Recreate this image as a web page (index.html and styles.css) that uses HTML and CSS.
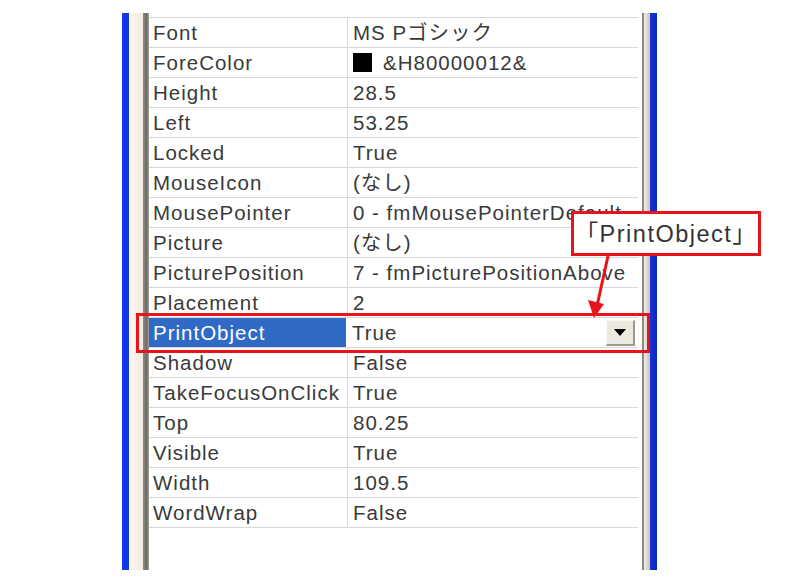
FILE: index.html
```html
<!DOCTYPE html>
<html>
<head>
<meta charset="utf-8">
<link rel="stylesheet" href="styles.css">
</head>
<body>
<div class="page">
  <div class="frame">
    <div class="edge blue"></div>
    <div class="edge beige"></div>
    <div class="edge gray"></div>
    <div class="grid">
      <div class="row"><div class="name">Font</div><div class="val">MS Pゴシック</div></div>
      <div class="row"><div class="name">ForeColor</div><div class="val"><span class="swatch"></span>&amp;H80000012&amp;</div></div>
      <div class="row"><div class="name">Height</div><div class="val">28.5</div></div>
      <div class="row"><div class="name">Left</div><div class="val">53.25</div></div>
      <div class="row"><div class="name">Locked</div><div class="val">True</div></div>
      <div class="row"><div class="name">MouseIcon</div><div class="val">(なし)</div></div>
      <div class="row"><div class="name">MousePointer</div><div class="val">0 - fmMousePointerDefault</div></div>
      <div class="row"><div class="name">Picture</div><div class="val">(なし)</div></div>
      <div class="row"><div class="name">PicturePosition</div><div class="val">7 - fmPicturePositionAbove</div></div>
      <div class="row"><div class="name">Placement</div><div class="val">2</div></div>
      <div class="row sel"><div class="name">PrintObject</div><div class="val"><span class="seltext">True</span><span class="drop"><svg width="12" height="7" viewBox="0 0 12 7"><path d="M0 0H12L6 7Z" fill="#000"/></svg></span></div></div>
      <div class="row"><div class="name">Shadow</div><div class="val">False</div></div>
      <div class="row"><div class="name">TakeFocusOnClick</div><div class="val">True</div></div>
      <div class="row"><div class="name">Top</div><div class="val">80.25</div></div>
      <div class="row"><div class="name">Visible</div><div class="val">True</div></div>
      <div class="row"><div class="name">Width</div><div class="val">109.5</div></div>
      <div class="row last"><div class="name">WordWrap</div><div class="val">False</div></div>
    </div>
    <div class="edge gray r"></div>
    <div class="edge beige r"></div>
    <div class="edge blue r"></div>
  </div>
  <div class="redbox"></div>
  <div class="callout">「PrintObject」</div>
  <svg class="arrow" width="40" height="70" viewBox="0 0 40 70">
    <line x1="30" y1="0" x2="19" y2="50" stroke="#e8141c" stroke-width="3"/>
    <path d="M10 44 L26 48 L16 62 Z" fill="#e8141c"/>
  </svg>
</div>
</body>
</html>
```

FILE: styles.css
```css
html, body {
  margin: 0;
  padding: 0;
  background: #ffffff;
}
.page {
  position: relative;
  width: 800px;
  height: 584px;
  overflow: hidden;
  font-family: "Liberation Sans", Arial, "Noto Sans CJK JP", sans-serif;
  color: #3a3a3a;
}
.frame {
  display: flex;
  margin-left: 122px;
  padding-top: 13px;
  height: 557px;
  width: 536px;
}
.edge { height: 100%; }
.edge.blue { width: 7px; background: linear-gradient(90deg, #1a40e0, #0a34f0 50%, #1c3ad0); }
.edge.beige { width: 14px; background: linear-gradient(90deg, #fbf5ee, #f3ece2); }
.edge.gray { width: 6px; background: linear-gradient(90deg, #8e8b86, #6f6c68 60%, #a7a39c); }
.edge.gray.r { width: 2px; background: #8c8a86; margin-left: 4px; }
.edge.beige.r { width: 6px; background: linear-gradient(90deg, #f4ede3, #c9c2b5); }
.edge.blue.r { width: 7px; background: linear-gradient(90deg, #1434e0, #0b26b8); }
.grid {
  width: 489px;
  padding-top: 4px;
  display: flex;
  flex-direction: column;
}
.row {
  display: flex;
  height: 29px;
  border-top: 1px solid #d8d8d6;
  font-size: 20.5px;
  line-height: 30px;
  letter-spacing: 1px;
}
.row.last { border-bottom: 1px solid #d8d8d6; }
.name {
  width: 194px;
  padding-left: 4px;
  border-right: 1px solid #d8d8d6;
  white-space: nowrap;
  overflow: hidden;
}
.val {
  flex: 1;
  padding-left: 5px;
  white-space: nowrap;
  overflow: hidden;
  display: flex;
  align-items: center;
}
.swatch {
  display: inline-block;
  width: 19px;
  height: 19px;
  background: #000;
  margin-right: 11px;
}
.sel .name {
  background: #3169c6;
  color: #ffffff;
  border-right: 2px solid #ffffff;
  width: 193px;
}
.sel .val {
  padding-left: 4px;
}
.seltext { flex: 1; }
.drop {
  width: 29px;
  height: 26px;
  margin-right: 3px;
  box-sizing: border-box;
  background: #ece9e0;
  border-top: 1px solid #f8f7f3;
  border-left: 1px solid #f8f7f3;
  border-right: 2px solid #9c998f;
  border-bottom: 2px solid #9c998f;
  display: flex;
  align-items: center;
  justify-content: center;
}
.redbox {
  position: absolute;
  left: 136px;
  top: 313px;
  width: 508px;
  height: 34px;
  border: 3px solid #e8141c;
}
.callout {
  position: absolute;
  left: 571px;
  top: 211px;
  width: 184px;
  height: 39px;
  border: 3px solid #e8141c;
  background: #ffffff;
  font-size: 23.5px;
  line-height: 40px;
  letter-spacing: 1.5px;
  text-align: center;
  white-space: nowrap;
  color: #333333;
}
.arrow {
  position: absolute;
  left: 578px;
  top: 256px;
}
```
